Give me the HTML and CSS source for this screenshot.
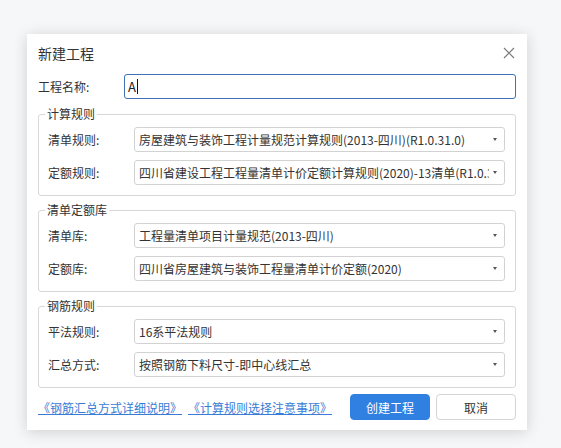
FILE: index.html
```html
<!DOCTYPE html>
<html lang="zh-CN">
<head>
<meta charset="utf-8">
<title>新建工程</title>
<link rel="stylesheet" href="styles.css">
</head>
<body>
<div class="dialog">
  <div class="header">
    <span class="title">新建工程</span>
    <svg class="close" width="12" height="12" viewBox="0 0 12 12"><path d="M1 1L11 11M11 1L1 11" stroke="#7a7a7a" stroke-width="1.2" fill="none"/></svg>
  </div>
  <div class="name-row">
    <span class="label">工程名称:</span>
    <div class="input"><span>A</span><span class="caret"></span></div>
  </div>
  <fieldset class="group">
    <legend>计算规则</legend>
    <div class="row"><span class="label">清单规则:</span><div class="select"><span class="val">房屋建筑与装饰工程计量规范计算规则(2013-四川)(R1.0.31.0)</span><i class="arrow"></i></div></div>
    <div class="row"><span class="label">定额规则:</span><div class="select"><span class="val">四川省建设工程工程量清单计价定额计算规则(2020)-13清单(R1.0.31.0)</span><i class="arrow"></i></div></div>
  </fieldset>
  <fieldset class="group">
    <legend>清单定额库</legend>
    <div class="row"><span class="label">清单库:</span><div class="select"><span class="val">工程量清单项目计量规范(2013-四川)</span><i class="arrow"></i></div></div>
    <div class="row"><span class="label">定额库:</span><div class="select"><span class="val">四川省房屋建筑与装饰工程量清单计价定额(2020)</span><i class="arrow"></i></div></div>
  </fieldset>
  <fieldset class="group">
    <legend>钢筋规则</legend>
    <div class="row"><span class="label">平法规则:</span><div class="select"><span class="val">16系平法规则</span><i class="arrow"></i></div></div>
    <div class="row"><span class="label">汇总方式:</span><div class="select"><span class="val">按照钢筋下料尺寸-即中心线汇总</span><i class="arrow"></i></div></div>
  </fieldset>
  <div class="footer">
    <div class="links">
      <a href="#">《钢筋汇总方式详细说明》</a>
      <a href="#">《计算规则选择注意事项》</a>
    </div>
    <div class="buttons">
      <button class="btn primary">创建工程</button>
      <button class="btn">取消</button>
    </div>
  </div>
</div>
</body>
</html>
```
FILE: styles.css
```css
html, body {
  margin: 0;
  padding: 0;
  background: #f6f7f9;
  width: 561px;
  height: 448px;
  overflow: hidden;
  font-family: "Noto Sans CJK SC", "Microsoft YaHei", sans-serif;
  font-size: 12px;
  color: #333;
}

.dialog {
  margin: 34px 0 0 27px;
  width: 500px;
  height: 396px;
  box-sizing: border-box;
  background: #fff;
  padding: 0 11px 10px 11px;
  box-shadow: 0 2px 14px rgba(0, 0, 0, 0.16);
  display: flex;
  flex-direction: column;
}

.header {
  display: flex;
  align-items: center;
  justify-content: space-between;
  padding-top: 9px;
  height: 20px;
}

.title {
  font-size: 14px;
  line-height: 20px;
  color: #333;
}

.close {
  margin-right: 1px;
}

.name-row {
  display: flex;
  align-items: center;
  margin-top: 11px;
  height: 25px;
}

.label {
  width: 86px;
  flex: none;
  font-size: 12px;
  line-height: 16px;
  color: #333;
}

.input {
  flex: 1;
  height: 25px;
  box-sizing: border-box;
  border: 1px solid #3d72b4;
  border-radius: 3px;
  display: flex;
  align-items: center;
  padding-left: 3px;
  font-size: 13px;
  color: #222;
}

.caret {
  display: inline-block;
  width: 1px;
  height: 15px;
  background: #111;
  margin-left: 1px;
}

.group {
  margin: 6px 0 0 0;
  min-width: 0;
  min-inline-size: 0;
  padding: 5px 10px 10px 9px;
  border: 1px solid #d8d8d8;
  border-radius: 3px;
  display: flex;
  flex-direction: column;
  gap: 8px;
}

.group:first-of-type {
  margin-top: 7px;
}

.group legend {
  font-size: 12px;
  line-height: 16px;
  padding: 0 2px;
  margin-left: -3px;
  color: #333;
}

.row {
  display: flex;
  align-items: center;
  height: 25px;
  min-width: 0;
}

.select {
  flex: 1;
  min-width: 0;
  height: 25px;
  box-sizing: border-box;
  border: 1px solid #d2d2d2;
  border-radius: 3px;
  display: flex;
  align-items: center;
  padding: 0 7px 0 4px;
  gap: 4px;
}

.val {
  flex: 1;
  min-width: 0;
  overflow: hidden;
  white-space: nowrap;
  font-size: 12px;
  line-height: 16px;
  color: #333;
}

.arrow {
  flex: none;
  width: 0;
  height: 0;
  border-left: 2.5px solid transparent;
  border-right: 2.5px solid transparent;
  border-top: 3px solid #555;
}

.footer {
  margin-top: 6px;
  display: flex;
  align-items: center;
  justify-content: space-between;
  height: 26px;
}

.links {
  display: flex;
  gap: 6px;
}

.links a {
  color: #3a7bd5;
  font-size: 12px;
  text-decoration: underline;
}

.buttons {
  display: flex;
  gap: 6px;
}

.btn {
  width: 80px;
  height: 26px;
  box-sizing: border-box;
  border: 1px solid #d4d4d4;
  border-radius: 4px;
  background: #fff;
  font-family: "Noto Sans CJK SC", sans-serif;
  font-size: 12px;
  color: #333;
  padding: 0;
}

.btn.primary {
  background: #2f80e1;
  border-color: #2f80e1;
  color: #fff;
}
```
